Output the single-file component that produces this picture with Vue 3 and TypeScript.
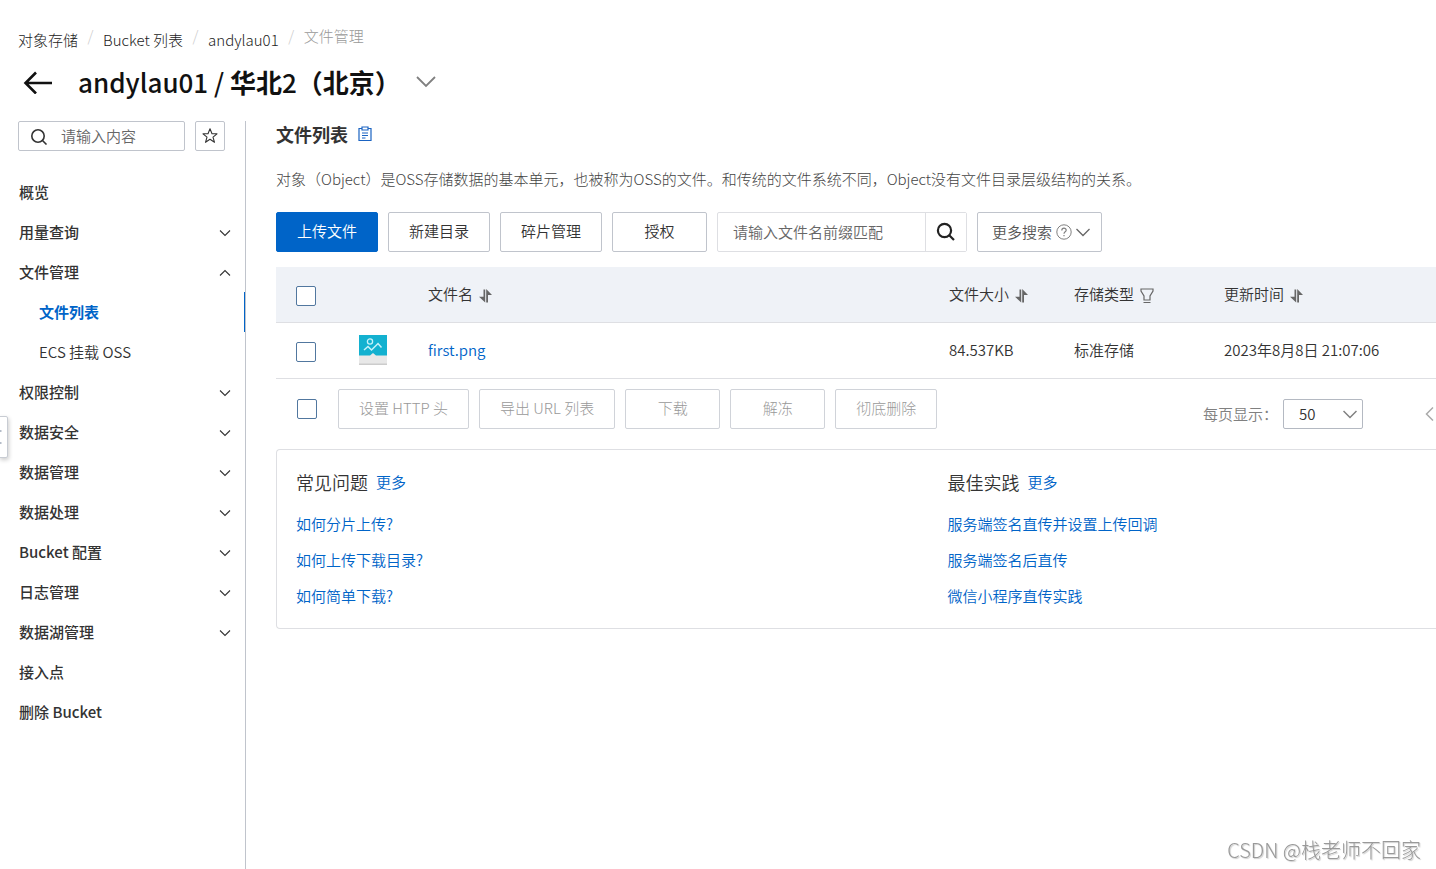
<script setup lang="ts">
import { ref } from 'vue'

interface MenuItem {
  label: string
  expandable?: boolean
  open?: boolean
  children?: { label: string; active?: boolean }[]
}

const menu: MenuItem[] = [
  { label: '概览' },
  { label: '用量查询', expandable: true },
  {
    label: '文件管理',
    expandable: true,
    open: true,
    children: [{ label: '文件列表', active: true }, { label: 'ECS 挂载 OSS' }],
  },
  { label: '权限控制', expandable: true },
  { label: '数据安全', expandable: true },
  { label: '数据管理', expandable: true },
  { label: '数据处理', expandable: true },
  { label: 'Bucket 配置', expandable: true },
  { label: '日志管理', expandable: true },
  { label: '数据湖管理', expandable: true },
  { label: '接入点' },
  { label: '删除 Bucket' },
]

const actions: string[] = ['新建目录', '碎片管理', '授权']
const batchActions: string[] = ['设置 HTTP 头', '导出 URL 列表', '下载', '解冻', '彻底删除']
const files = [{ name: 'first.png', size: '84.537KB', type: '标准存储', time: '2023年8月8日 21:07:06' }]
const guides = [
  { title: '常见问题', links: ['如何分片上传?', '如何上传下载目录?', '如何简单下载?'] },
  { title: '最佳实践', links: ['服务端签名直传并设置上传回调', '服务端签名后直传', '微信小程序直传实践'] },
]

const menuQuery = ref('')
const prefix = ref('')
const pageSize = ref('50')
</script>

<template>
  <div class="page">
    <header class="top">
      <nav class="crumbs" aria-label="breadcrumb">
        <a href="#">对象存储</a><span class="sep">/</span>
        <a href="#">Bucket 列表</a><span class="sep">/</span>
        <a href="#">andylau01</a><span class="sep">/</span>
        <span class="current">文件管理</span>
      </nav>
      <div class="title-row">
        <button class="bare" aria-label="返回">
          <svg width="30" height="24" viewBox="0 0 30 24" fill="none" stroke="#111" stroke-width="2.6">
            <path d="M13 2.500 2.500 13 13 23.500M2.500 13H29" />
          </svg>
        </button>
        <h1>andylau01 / <b>华北</b>2<b>（北京）</b></h1>
        <button class="bare" aria-label="切换 Bucket">
          <svg width="20" height="12" viewBox="0 0 20 12" fill="none" stroke="#808080" stroke-width="1.8">
            <path d="m1 1 9 9 9-9" />
          </svg>
        </button>
      </div>
    </header>

    <div class="body">
      <aside class="side">
        <div class="side-search">
          <label class="menu-search">
            <svg width="18" height="18" viewBox="0 0 18 18" fill="none" stroke="#333" stroke-width="1.6">
              <circle cx="8" cy="9" r="6.2" />
              <path d="m12.5 13.5 4 4" />
            </svg>
            <input v-model="menuQuery" type="text" placeholder="请输入内容" aria-label="请输入内容" />
          </label>
          <button class="star" aria-label="收藏">
            <svg width="16" height="16" viewBox="0 0 16 16" fill="none" stroke="#333" stroke-width="1.1" stroke-linejoin="round">
              <path d="m8 .8 2 5h5l-4 3.300 1.500 5.200L8 11.200l-4.500 3.100L5 9.100 1 5.800h5z" />
            </svg>
          </button>
        </div>
        <nav class="menu">
          <template v-for="item in menu" :key="item.label">
            <a href="#" class="menu-item">
              <span>{{ item.label }}</span>
              <svg v-if="item.expandable" width="12" height="10" viewBox="0 0 12 10" fill="none" stroke="#333" stroke-width="1.1">
                <path :d="item.open ? 'M1 8.500 6 3.500l5 5' : 'm1 3.500 5 5 5-5'" />
              </svg>
            </a>
            <a v-for="child in item.children" :key="child.label" href="#" class="menu-child" :class="{ active: child.active }">{{ child.label }}</a>
          </template>
        </nav>
      </aside>

      <main class="main">
        <div class="heading">
          <h2>文件列表</h2>
          <svg width="14" height="16" viewBox="0 0 14 16" fill="none" stroke="#1a63c2" stroke-width="1.200">
            <path d="M3.500 2.500H1v12h12v-12h-2.500M4 1h6v3H4zM4 7h6M4 9.500h6M4 12h3.500" />
          </svg>
        </div>
        <p class="desc">对象（Object）是OSS存储数据的基本单元，也被称为OSS的文件。和传统的文件系统不同，Object没有文件目录层级结构的关系。</p>

        <div class="toolbar">
          <button class="btn primary">上传文件</button>
          <button v-for="a in actions" :key="a" class="btn">{{ a }}</button>
          <div class="search">
            <input v-model="prefix" type="text" placeholder="请输入文件名前缀匹配" aria-label="文件名前缀" />
            <button aria-label="搜索">
              <svg width="20" height="20" viewBox="0 0 20 20" fill="none" stroke="#222" stroke-width="2.200">
                <circle cx="8.500" cy="8.500" r="6.600" />
                <path d="m13 13 5 5" />
              </svg>
            </button>
          </div>
          <button class="btn more">
            <span>更多搜索</span>
            <svg width="16" height="16" viewBox="0 0 16 16" fill="none" stroke="#808080">
              <circle cx="8" cy="8" r="7.200" />
              <path d="M5.800 6.500C5.800 3.400 10.200 3.600 10.200 6.200 10.200 7.900 8 7.800 8 9.800M8 11v1.300" stroke-width="1.200" />
            </svg>
            <svg width="14" height="9" viewBox="0 0 14 9" fill="none" stroke="#666" stroke-width="1.300">
              <path d="m.5 1 6.500 6.500L13.500 1" />
            </svg>
          </button>
        </div>

        <table class="files">
          <colgroup>
            <col class="c-check" /><col class="c-icon" /><col /><col class="c-size" /><col class="c-type" /><col class="c-time" />
          </colgroup>
          <thead>
            <tr>
              <th><input type="checkbox" aria-label="全选" /></th>
              <th></th>
              <th v-for="h in ['文件名', '文件大小', '存储类型', '更新时间']" :key="h">
                <span class="th">
                  <span>{{ h }}</span>
                  <svg v-if="h === '存储类型'" class="filter" width="14" height="16" viewBox="0 0 14 16" fill="none" stroke="#666" stroke-width="1.200">
                    <path d="M1 1h12v2L10 8v4H4V8L1 3zM3.500 14.500h7" />
                  </svg>
                  <svg v-else class="sort" width="13" height="14" viewBox="0 0 13 14" fill="#666">
                    <path d="M4.500.5h1.700v13L0 7.700h4.500zM7.200 0 13 6H9v7.500H7.200z" />
                  </svg>
                </span>
              </th>
            </tr>
          </thead>
          <tbody>
            <tr v-for="f in files" :key="f.name">
              <td><input type="checkbox" :aria-label="f.name" /></td>
              <td class="thumb">
                <svg width="28" height="30" viewBox="0 0 28 30" fill="none">
                  <path d="M0 0h28v30H0z" fill="#e8e8e8" />
                  <path d="M0 28.500h28V30H0z" fill="#ccc" />
                  <path d="M0 0h28v20.500H17L14 18l-3 2.500H0z" fill="#13b1d0" />
                  <circle cx="11" cy="6.500" r="2.600" stroke="#c8f2fa" stroke-width="1.300" />
                  <path d="m5 15 4-3.500 3.500 3.500 6.500-6.500 3.500 4" stroke="#c8f2fa" stroke-width="1.500" />
                </svg>
              </td>
              <td><a href="#">{{ f.name }}</a></td>
              <td>{{ f.size }}</td>
              <td>{{ f.type }}</td>
              <td>{{ f.time }}</td>
            </tr>
          </tbody>
        </table>

        <div class="batch">
          <input type="checkbox" aria-label="选择全部文件" />
          <div class="batch-actions">
            <button v-for="b in batchActions" :key="b" class="btn" disabled>{{ b }}</button>
          </div>
          <div class="pager">
            <label for="size">每页显示：</label>
            <div class="select">
              <select id="size" v-model="pageSize">
                <option>50</option>
                <option>100</option>
              </select>
              <svg width="14" height="9" viewBox="0 0 14 9" fill="none" stroke="#808080" stroke-width="1.500">
                <path d="m.5 1 6.500 6.500L13.500 1" />
              </svg>
            </div>
            <button class="bare prev" aria-label="上一页">
              <svg width="9" height="14" viewBox="0 0 9 14" fill="none" stroke="#aaa" stroke-width="1.500">
                <path d="M8 .5 1.500 7 8 13.500" />
              </svg>
            </button>
          </div>
        </div>

        <div class="guides">
          <section v-for="g in guides" :key="g.title">
            <div class="guide-head">
              <h3>{{ g.title }}</h3>
              <a href="#">更多</a>
            </div>
            <ul>
              <li v-for="l in g.links" :key="l"><a href="#">{{ l }}</a></li>
            </ul>
          </section>
        </div>
      </main>
    </div>

    <button class="drawer" aria-label="展开导航">
      <svg width="2" height="16" viewBox="0 0 2 16" fill="#b4bcc8">
        <path d="M0 1h1.500v2H0zM0 13h1.500v2H0z" />
      </svg>
    </button>
    <div class="watermark">CSDN @栈老师不回家</div>
  </div>
</template>

<style>
body {
  margin: 0;
  background: #fff;
}
</style>

<style scoped>
* {
  box-sizing: border-box;
}
.page {
  display: flex;
  flex-direction: column;
  min-height: 100vh;
  overflow-x: hidden;
  font: 350 15px/20px "Noto Sans CJK SC", "Noto Sans", sans-serif;
  color: #333;
}
button,
input,
select {
  font: inherit;
  color: inherit;
}
button {
  cursor: pointer;
  white-space: nowrap;
}
a {
  color: #0064c8;
  text-decoration: none;
}
h1,
h2,
h3,
p,
ul {
  margin: 0;
  padding: 0;
}
svg {
  flex: none;
  display: block;
}
.bare {
  padding: 0;
  border: 0;
  background: none;
}
.top {
  padding: 26px 18px 0;
}
.crumbs {
  display: flex;
  align-items: flex-start;
  font-weight: 300;
}
.crumbs a {
  padding-top: 4px;
  color: #222;
}
.sep {
  width: 25px;
  text-align: center;
  color: #ccc;
}
.current {
  color: #999;
}
.title-row {
  display: flex;
  align-items: center;
  height: 34px;
  margin-top: 15px;
  padding-left: 5px;
}
h1 {
  margin-left: 25px;
  font-size: 26px;
  line-height: 34px;
  font-weight: 500;
  color: #111;
}
h1 b {
  font-weight: 700;
}
h1 + .bare {
  margin-left: 15px;
}
.body {
  display: flex;
  flex: 1;
  margin-top: 22px;
}
.side {
  flex: none;
  width: 246px;
  border-right: 1px solid #c0c4cc;
}
.side-search {
  display: flex;
  gap: 10px;
  padding: 0 20px 0 18px;
}
.menu-search {
  display: flex;
  align-items: center;
  flex: 1;
  gap: 13px;
  height: 30px;
  padding: 0 11px;
  border: 1px solid #c0c4cc;
  border-radius: 2px;
}
.menu-search input {
  width: 100%;
  min-width: 0;
  padding: 0;
  border: 0;
  outline: 0;
  background: none;
}
input::placeholder {
  color: #666;
  opacity: 1;
}
.star {
  display: grid;
  place-items: center;
  width: 30px;
  height: 30px;
  padding: 0;
  border: 1px solid #c0c4cc;
  border-radius: 2px;
  background: #fff;
}
.menu {
  margin-top: 21px;
}
.menu a {
  display: flex;
  align-items: center;
  justify-content: space-between;
  height: 40px;
  padding: 0 14px 0 19px;
  color: #333;
}
.menu .menu-item {
  font-weight: 500;
}
.menu .menu-child {
  padding-left: 39px;
}
.menu .active {
  border-right: 1px solid #0064c8;
  font-weight: 700;
  color: #0064c8;
}
.main {
  flex: 1;
  min-width: 0;
  padding-left: 30px;
}
.heading {
  display: flex;
  align-items: center;
  gap: 10px;
  height: 26px;
}
h2 {
  font-size: 18px;
  line-height: 26px;
  font-weight: 700;
}
.desc {
  margin-top: 22px;
  font-weight: 300;
  color: #444;
}
.toolbar {
  display: flex;
  gap: 10px;
  margin: 23px 0 15px;
}
.btn {
  min-width: 95px;
  height: 40px;
  padding: 0 20px 2px;
  border: 1px solid #c0c4cc;
  border-radius: 2px;
  background: #fff;
}
.primary {
  border-color: #0064c8;
  background: #0064c8;
  color: #fff;
}
.btn:disabled {
  border-color: #d0d3d9;
  font-weight: 300;
  color: #999;
}
.search {
  display: flex;
  width: 250px;
  height: 40px;
  border: 1px solid #dedfe3;
  border-radius: 2px;
}
.search input {
  flex: 1;
  min-width: 0;
  padding: 0 15px;
  border: 0;
  outline: 0;
  background: none;
}
.search button {
  display: grid;
  place-items: center;
  width: 41px;
  padding: 0;
  border: 0;
  border-left: 1px solid #dedfe3;
  background: #fff;
}
.more {
  display: flex;
  align-items: center;
  gap: 4px;
  padding: 0 11px 0 14px;
  color: #555;
}
input[type='checkbox'] {
  appearance: none;
  display: block;
  width: 20px;
  height: 20px;
  margin: 0;
  border: 1px solid #51779f;
  border-radius: 2px;
  background: #fff;
}
.files {
  width: 100%;
  table-layout: fixed;
  border-collapse: separate;
  border-spacing: 0;
}
.files input[type='checkbox'] {
  margin-top: 3px;
}
.c-check {
  width: 62px;
}
.c-icon {
  width: 70px;
}
.c-size {
  width: 125px;
}
.c-type {
  width: 150px;
}
.c-time {
  width: 232px;
}
.files th,
.files td {
  height: 56px;
  padding: 0 0 1px 20px;
  border-bottom: 1px solid #dedfe3;
  text-align: left;
  font-weight: 350;
}
.files th {
  background: #eff2f7;
}
.files .thumb {
  padding-left: 21px;
}
.th {
  display: flex;
  align-items: center;
}
.sort {
  margin: 3px 0 0 6px;
}
.filter {
  margin: 3px 0 0 6px;
}
.batch {
  display: flex;
  align-items: center;
  padding: 10px 2px 20px 21px;
}
.batch-actions {
  display: flex;
  gap: 10px;
  margin-left: 21px;
}
.pager {
  display: flex;
  align-items: center;
  margin: 10px 0 0 auto;
  color: #808080;
}
.select {
  display: grid;
  align-items: center;
  width: 80px;
  margin-left: 5px;
}
.select select,
.select svg {
  grid-area: 1 / 1;
}
.select select {
  appearance: none;
  width: 100%;
  height: 30px;
  padding: 0 15px;
  border: 1px solid #b4b9c2;
  border-radius: 2px;
  background: #fff;
  color: #333;
}
.select svg {
  justify-self: end;
  margin-right: 6px;
  pointer-events: none;
}
.prev {
  margin-left: 62px;
}
.guides {
  display: grid;
  grid-template-columns: 4fr 3fr;
  padding: 19px 0 14px 19px;
  border: 1px solid #dedfe3;
  border-right: 0;
  border-radius: 4px 0 0 4px;
}
.guide-head {
  display: flex;
  align-items: center;
  gap: 8px;
  height: 26px;
  margin-bottom: 11px;
}
h3 {
  font-size: 18px;
  line-height: 26px;
  font-weight: 350;
}
.guides ul {
  list-style: none;
}
.guides li {
  height: 36px;
  line-height: 36px;
}
.drawer {
  position: fixed;
  top: 416px;
  left: -1px;
  display: flex;
  align-items: center;
  width: 9px;
  height: 42px;
  padding: 0;
  border: 1px solid #c8ccd3;
  border-radius: 0 2px 2px 0;
  background: #fff;
  box-shadow: 1px 2px 4px rgba(0, 0, 0, 0.2);
}
.watermark {
  position: fixed;
  right: 15px;
  bottom: 5px;
  font-size: 20px;
  line-height: 28px;
  font-weight: 300;
  color: #999;
  text-shadow: 1px 1px 1px #ccc;
}
</style>
